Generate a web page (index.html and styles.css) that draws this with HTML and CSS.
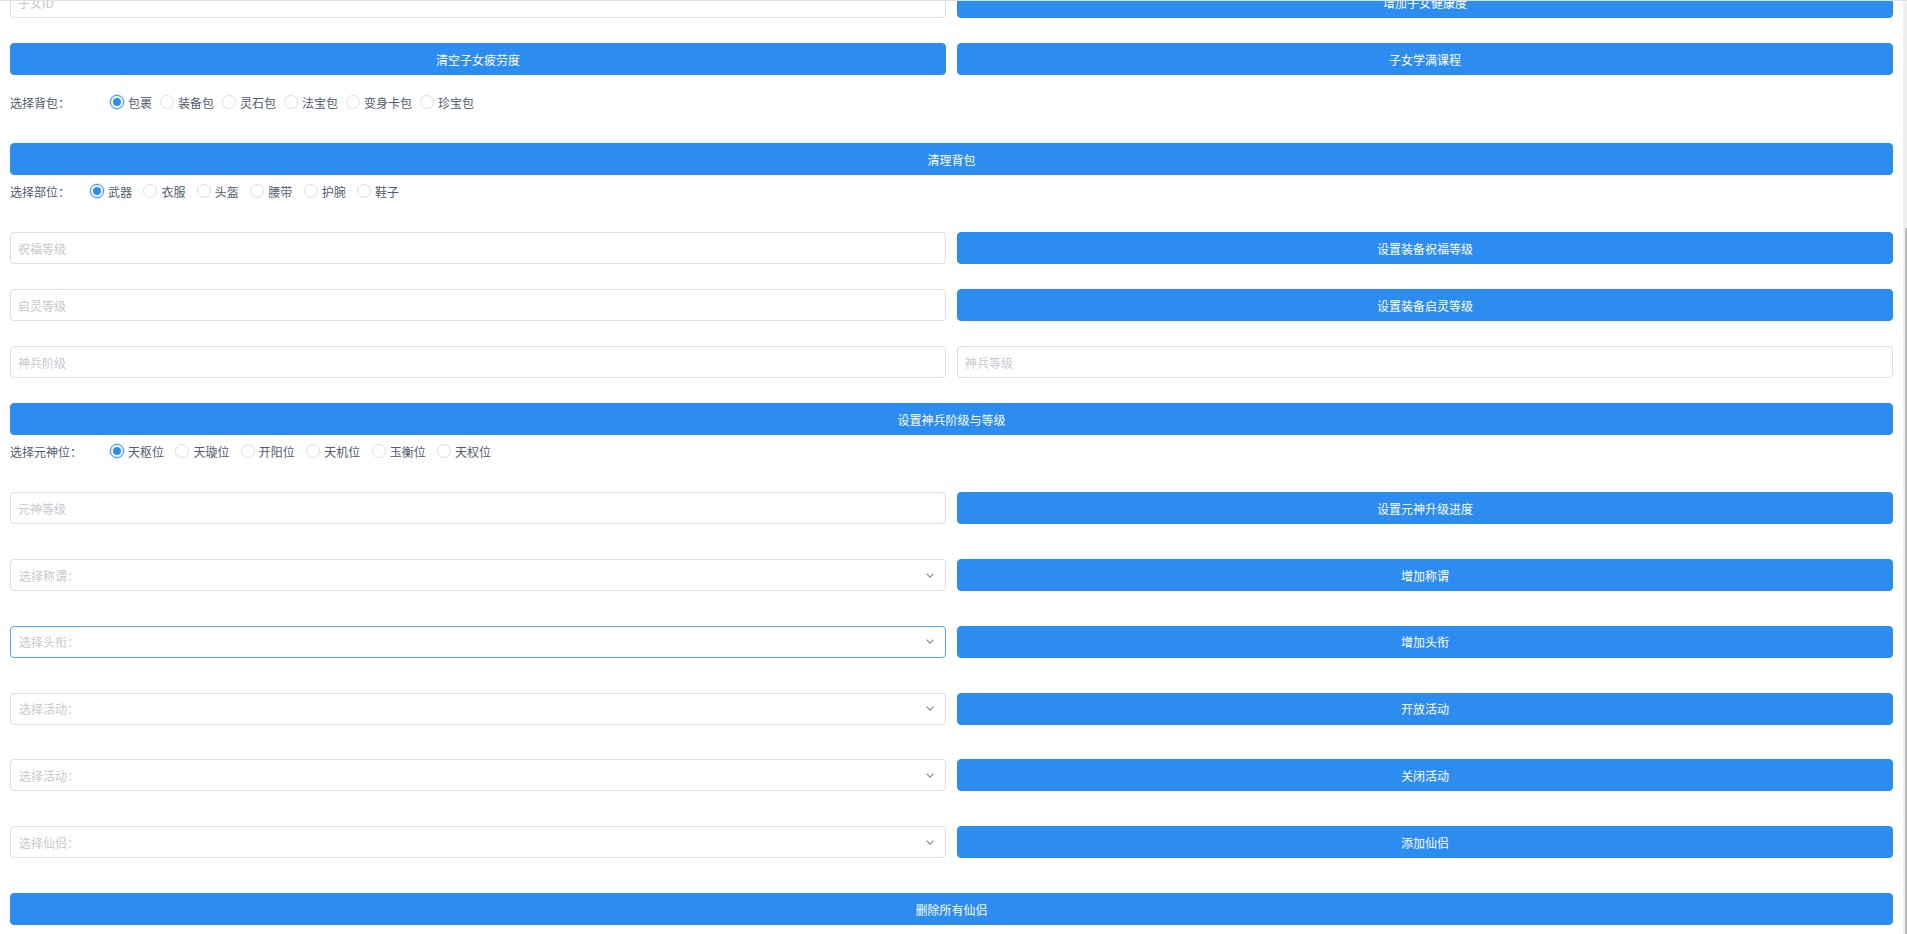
FILE: index.html
```html
<!DOCTYPE html>
<html lang="zh-CN">
<head>
    <meta charset="utf-8">
    <title>GM工具</title>
    <link rel="stylesheet" href="styles.css">
</head>
<body>
<div class="window">
    <main class="page">
        <div class="content">
            <div class="row">
                <input class="ipt" type="text" placeholder="子女ID">
                <button class="btn">增加子女健康度</button>
            </div>
            <div class="row tight">
                <button class="btn">清空子女疲劳度</button>
                <button class="btn">子女学满课程</button>
            </div>
            <div class="radio-row">
                <span class="field-label">选择背包：</span>
                <label class="radio"><span class="dot on"></span>包裹</label>
                <label class="radio"><span class="dot"></span>装备包</label>
                <label class="radio"><span class="dot"></span>灵石包</label>
                <label class="radio"><span class="dot"></span>法宝包</label>
                <label class="radio"><span class="dot"></span>变身卡包</label>
                <label class="radio"><span class="dot"></span>珍宝包</label>
            </div>
            <button class="btn full">清理背包</button>
            <div class="radio-row loose">
                <span class="field-label short">选择部位：</span>
                <label class="radio"><span class="dot on"></span>武器</label>
                <label class="radio"><span class="dot"></span>衣服</label>
                <label class="radio"><span class="dot"></span>头盔</label>
                <label class="radio"><span class="dot"></span>腰带</label>
                <label class="radio"><span class="dot"></span>护腕</label>
                <label class="radio"><span class="dot"></span>鞋子</label>
            </div>
            <div class="row">
                <input class="ipt" type="text" placeholder="祝福等级">
                <button class="btn">设置装备祝福等级</button>
            </div>
            <div class="row">
                <input class="ipt" type="text" placeholder="启灵等级">
                <button class="btn">设置装备启灵等级</button>
            </div>
            <div class="row">
                <input class="ipt" type="text" placeholder="神兵阶级">
                <input class="ipt" type="text" placeholder="神兵等级">
            </div>
            <button class="btn full">设置神兵阶级与等级</button>
            <div class="radio-row loose">
                <span class="field-label">选择元神位：</span>
                <label class="radio"><span class="dot on"></span>天枢位</label>
                <label class="radio"><span class="dot"></span>天璇位</label>
                <label class="radio"><span class="dot"></span>开阳位</label>
                <label class="radio"><span class="dot"></span>天机位</label>
                <label class="radio"><span class="dot"></span>玉衡位</label>
                <label class="radio"><span class="dot"></span>天权位</label>
            </div>
            <div class="row wide">
                <input class="ipt" type="text" placeholder="元神等级">
                <button class="btn">设置元神升级进度</button>
            </div>
            <div class="row wide">
                <div class="sel"><span>选择称谓：</span><svg width="8" height="5" viewBox="0 0 8 5"><polyline points="0.6,0.6 4,4.2 7.4,0.6" fill="none" stroke="#808695" stroke-width="1.1"/></svg></div>
                <button class="btn">增加称谓</button>
            </div>
            <div class="row wide">
                <div class="sel focus"><span>选择头衔：</span><svg width="8" height="5" viewBox="0 0 8 5"><polyline points="0.6,0.6 4,4.2 7.4,0.6" fill="none" stroke="#808695" stroke-width="1.1"/></svg></div>
                <button class="btn">增加头衔</button>
            </div>
            <div class="row wide">
                <div class="sel"><span>选择活动：</span><svg width="8" height="5" viewBox="0 0 8 5"><polyline points="0.6,0.6 4,4.2 7.4,0.6" fill="none" stroke="#808695" stroke-width="1.1"/></svg></div>
                <button class="btn">开放活动</button>
            </div>
            <div class="row wide">
                <div class="sel"><span>选择活动：</span><svg width="8" height="5" viewBox="0 0 8 5"><polyline points="0.6,0.6 4,4.2 7.4,0.6" fill="none" stroke="#808695" stroke-width="1.1"/></svg></div>
                <button class="btn">关闭活动</button>
            </div>
            <div class="row wide">
                <div class="sel"><span>选择仙侣：</span><svg width="8" height="5" viewBox="0 0 8 5"><polyline points="0.6,0.6 4,4.2 7.4,0.6" fill="none" stroke="#808695" stroke-width="1.1"/></svg></div>
                <button class="btn">添加仙侣</button>
            </div>
            <button class="btn full">删除所有仙侣</button>
        </div>
    </main>
    <div class="scrollbar"><div class="thumb"></div></div>
</div>
</body>
</html>
```

FILE: styles.css
```css
*{
    box-sizing: border-box;
}
body{
    margin: 0;
    background-color: #fff;
    font-family: "Noto Sans CJK SC", "Noto Sans", sans-serif;
    font-size: 12px;
    color: #515a6e;
}
.window{
    display: flex;
    height: 934px;
    border-top: 1px solid #e1e1e1;
    overflow: hidden;
}
.page{
    flex: 1;
    display: flex;
    flex-direction: column;
    justify-content: flex-end;
    overflow: hidden;
    padding: 0 10px 9px 10px;
}
.content{
    flex-shrink: 0;
}
.scrollbar{
    width: 4px;
    background-color: #efefef;
    display: flex;
    flex-direction: column;
    justify-content: flex-end;
}
.thumb{
    height: 706px;
    width: 2px;
    margin-left: 2px;
    background-color: #bdbdbd;
}
.row{
    display: grid;
    grid-template-columns: 1fr 1fr;
    column-gap: 11px;
    margin-bottom: 25px;
}
.row.tight{
    margin-bottom: 11px;
}
.row.wide{
    margin-bottom: 34.8px;
}
.btn{
    display: block;
    width: 100%;
    height: 32px;
    margin: 0;
    padding: 0 15px;
    background-color: #2d8cf0;
    border: 1px solid #2d8cf0;
    border-radius: 4px;
    color: #fff;
    font-family: inherit;
    font-size: 12px;
}
.ipt{
    display: block;
    width: 100%;
    height: 32px;
    margin: 0;
    padding: 4px 7px;
    border: 1px solid #dcdee2;
    border-radius: 4px;
    font-family: inherit;
    font-size: 12px;
    color: #515a6e;
    outline: none;
}
.ipt::placeholder{
    color: #c5c8ce;
}
.sel{
    display: flex;
    align-items: center;
    justify-content: space-between;
    height: 32px;
    padding: 0 11px 0 8px;
    border: 1px solid #dcdee2;
    border-radius: 4px;
    color: #c5c8ce;
}
.sel.focus{
    border-color: #57a3f3;
}
.radio-row{
    display: flex;
    align-items: center;
    height: 32px;
    margin-bottom: 25px;
}
.field-label{
    width: 100px;
    flex-shrink: 0;
}
.field-label.short{
    width: 80px;
}
.radio{
    display: inline-flex;
    align-items: center;
    margin-right: 8px;
}
.radio-row.loose .radio{
    margin-right: 11.4px;
}
.dot{
    display: inline-flex;
    align-items: center;
    justify-content: center;
    width: 14px;
    height: 14px;
    margin-right: 4px;
    border: 1px solid #dcdee2;
    border-radius: 50%;
    background-color: #fff;
}
.dot.on{
    border-color: #2d8cf0;
    box-shadow: 0 0 0 1px rgba(45, 140, 240, 0.2);
}
.dot.on::after{
    content: "";
    width: 8px;
    height: 8px;
    border-radius: 50%;
    background-color: #2d8cf0;
}
```
